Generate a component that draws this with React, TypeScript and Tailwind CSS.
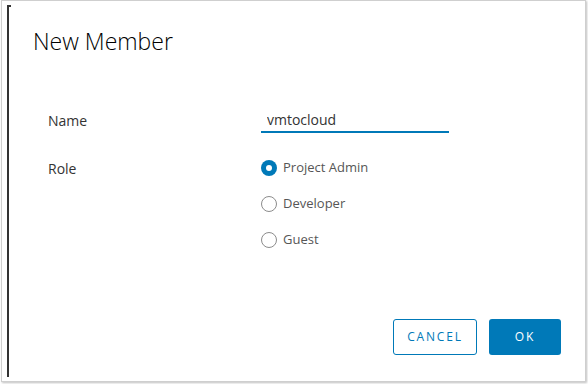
import React, { useState } from 'react';

const roles = ['Project Admin', 'Developer', 'Guest'];

function Radio({ label, checked, onSelect }: { label: string; checked: boolean; onSelect: () => void }) {
  return (
    <label className="flex h-[36px] items-center cursor-pointer" onClick={onSelect}>
      {checked ? (
        <span className="flex h-[16px] w-[16px] items-center justify-center rounded-full bg-[#0079b8]">
          <span className="h-[6px] w-[6px] rounded-full bg-white" />
        </span>
      ) : (
        <span className="h-[16px] w-[16px] rounded-full border border-[#8c8c8c] bg-white" />
      )}
      <span className="ml-[6px] text-[13px] text-[#565656]">{label}</span>
    </label>
  );
}

export default function App() {
  const [role, setRole] = useState('Project Admin');
  const [name, setName] = useState('vmtocloud');

  return (
    <div className="h-[384px] w-[588px] bg-white" style={{ fontFamily: '"Open Sans", "Liberation Sans", sans-serif' }}>
      <div className="ml-[1px] h-[382px] w-[585px] border border-[#cfcfcf] bg-white pl-[5px] pt-[4px] shadow-[1px_1px_2px_rgba(0,0,0,0.25)]">
        <div className="relative flex h-[372px] flex-col border-l-2 border-[#333]">
          <span className="absolute -left-[2px] top-0 h-[2px] w-[4px] bg-[#333]" />
          <h1 className="pl-[24px] pt-[20px] text-[23px] leading-[32px] font-light text-black">New Member</h1>

          <div className="mt-[45px] grid grid-cols-[213px_188px] pl-[39px]">
            <div className="flex h-[36px] items-center text-[14px] text-[#333]">Name</div>
            <div className="flex h-[36px] items-center">
              <input
                value={name}
                onChange={(e) => setName(e.target.value)}
                className="h-[26px] w-[188px] border-b-2 border-[#0079b8] px-[6px] text-[14px] text-[#333] outline-none"
              />
            </div>

            <div className="mt-[12px] flex h-[36px] items-center text-[14px] text-[#333]">Role</div>
            <div className="mt-[12px] flex flex-col">
              {roles.map((r) => (
                <Radio key={r} label={r} checked={role === r} onSelect={() => setRole(r)} />
              ))}
            </div>
          </div>

          <div className="mt-auto flex justify-end gap-[12px] pb-[22px] pr-[24px]">
            <button className="h-[36px] w-[84px] rounded-[3px] border border-[#0079b8] text-[12px] tracking-[0.15em] text-[#0079b8]">
              CANCEL
            </button>
            <button className="h-[36px] w-[72px] rounded-[3px] bg-[#0079b8] text-[12px] tracking-[0.15em] text-white">
              OK
            </button>
          </div>
        </div>
      </div>
    </div>
  );
}
